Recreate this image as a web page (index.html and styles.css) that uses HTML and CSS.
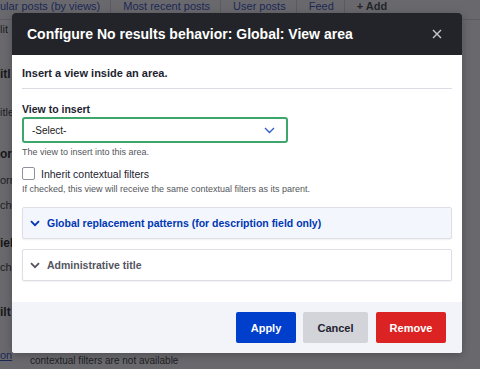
FILE: index.html
```html
<!DOCTYPE html>
<html>
<head>
<meta charset="utf-8">
<link rel="stylesheet" href="styles.css">
</head>
<body>
<div class="page">
  <div class="tabs">
    <span class="tab">ular posts (by views)</span>
    <span class="tab">Most recent posts</span>
    <span class="tab">User posts</span>
    <span class="tab">Feed</span>
    <span class="tab add">+ Add</span>
  </div>
  <div class="side">
    <span class="frag f1">lit</span>
    <span class="frag f2 b">itl</span>
    <span class="frag f3">itle</span>
    <span class="frag f4 b">or</span>
    <span class="frag f5">orn</span>
    <span class="frag f6">cho</span>
    <span class="frag f7 b">iel</span>
    <span class="frag f8">chi</span>
    <span class="frag f9 b">ilt</span>
    <span class="frag f10 link">on</span>
  </div>
  <div class="bottomline">contextual filters are not available</div>
</div>
<div class="overlay"></div>
<div class="dialog">
  <div class="titlebar">
    <h1 class="title">Configure No results behavior: Global: View area</h1>
    <span class="close">
      <svg width="10" height="10" viewBox="0 0 10 10"><path d="M1 1L9 9M9 1L1 9" stroke="#c8c9cc" stroke-width="1.4" fill="none"/></svg>
    </span>
  </div>
  <div class="content">
    <div class="intro">Insert a view inside an area.</div>
    <div class="field">
      <label class="label">View to insert</label>
      <div class="select">
        <span>-Select-</span>
        <svg width="11" height="7" viewBox="0 0 11 7"><path d="M1 1L5.5 5.5L10 1" stroke="#2f5ec4" stroke-width="1.4" fill="none"/></svg>
      </div>
      <div class="desc">The view to insert into this area.</div>
    </div>
    <div class="field check">
      <div class="checkrow"><span class="box"></span><span class="checklabel">Inherit contextual filters</span></div>
      <div class="desc">If checked, this view will receive the same contextual filters as its parent.</div>
    </div>
    <div class="details blue">
      <svg width="10" height="7" viewBox="0 0 10 7"><path d="M1 1.2L5 5.2L9 1.2" stroke="#0036b1" stroke-width="1.8" fill="none"/></svg>
      <span>Global replacement patterns (for description field only)</span>
    </div>
    <div class="details plain">
      <svg width="10" height="7" viewBox="0 0 10 7"><path d="M1 1.2L5 5.2L9 1.2" stroke="#545560" stroke-width="1.8" fill="none"/></svg>
      <span>Administrative title</span>
    </div>
  </div>
  <div class="footer">
    <button class="btn apply">Apply</button>
    <button class="btn cancel">Cancel</button>
    <button class="btn remove">Remove</button>
  </div>
</div>
</body>
</html>
```
FILE: styles.css
```css
html, body {
  margin: 0;
  padding: 0;
}
body {
  width: 480px;
  height: 369px;
  overflow: hidden;
  background: #ffffff;
  font-family: "Liberation Sans", Arial, sans-serif;
  position: relative;
}
.page {
  width: 480px;
  height: 369px;
  position: relative;
}
.tabs {
  display: flex;
  height: 22px;
  align-items: flex-start;
  border-bottom: 1px solid #d8d9de;
  font-size: 11px;
  color: #2c4cc0;
  margin-top: -3px;
}
.tab {
  padding: 0 10px 0 0;
  margin-right: 12px;
  border-right: 1px solid #d8d9de;
  line-height: 18px;
}
.tab.add { border-right: none; font-weight: bold; color: #444; }
.frag {
  position: absolute;
  left: 0;
  font-size: 11px;
  color: #333;
}
.frag.b { font-weight: bold; font-size: 12px; color: #222; }
.frag.link { color: #2c4cc0; text-decoration: underline; }
.f1 { top: 26px; }
.f2 { top: 70px; }
.f3 { top: 109px; }
.f4 { top: 150px; }
.f5 { top: 177px; }
.f6 { top: 202px; }
.f7 { top: 239px; }
.f8 { top: 264px; }
.f9 { top: 308px; }
.f10 { top: 352px; }
.bottomline {
  position: absolute;
  left: 30px;
  top: 358px;
  font-size: 10px;
  color: #333;
}
.overlay {
  position: absolute;
  inset: 0;
  background: rgba(20, 20, 26, 0.64);
}
.dialog {
  position: absolute;
  left: 12px;
  top: 13px;
  width: 450px;
  height: 340px;
  background: #fff;
  border-radius: 3px;
  overflow: hidden;
  display: flex;
  flex-direction: column;
  box-shadow: 0 2px 8px rgba(0,0,0,0.25);
}
.titlebar {
  height: 42px;
  flex: none;
  background: #232429;
  display: flex;
  align-items: center;
  justify-content: space-between;
  padding: 0 20px 0 15px;
}
.title {
  margin: 0;
  color: #fff;
  font-size: 14px;
  font-weight: bold;
}
.close { display: flex; }
.content {
  flex: 1;
  padding: 12px 10px 0 10px;
}
.intro {
  font-size: 11px;
  font-weight: bold;
  color: #222330;
  padding-bottom: 9px;
  border-bottom: 1px solid #dcdde2;
}
.field { margin-top: 14px; }
.label {
  display: block;
  font-size: 10.5px;
  font-weight: bold;
  color: #222330;
  margin-bottom: 2px;
}
.select {
  height: 22px;
  border: 2px solid #3fa66b;
  border-radius: 3px;
  display: flex;
  align-items: center;
  justify-content: space-between;
  padding: 0 11px 0 8px;
  box-sizing: content-box;
  width: 243px;
  font-size: 10px;
  color: #222;
}
.desc {
  font-size: 9px;
  color: #55565b;
  margin-top: 4px;
}
.field.check { margin-top: 10px; }
.checkrow {
  display: flex;
  align-items: center;
}
.box {
  width: 11px;
  height: 11px;
  border: 1px solid #8e929c;
  border-radius: 2px;
  margin-right: 6px;
}
.checklabel {
  font-size: 10.5px;
  color: #222330;
}
.details {
  box-sizing: border-box;
  height: 32px;
  border: 1px solid #dedfe4;
  border-radius: 2px;
  display: flex;
  align-items: center;
  padding-left: 7px;
  font-size: 10.5px;
  font-weight: bold;
  box-shadow: 0 1px 2px rgba(0,0,0,0.06);
}
.details svg { margin-right: 7px; }
.details.blue {
  background: #f3f6fd;
  color: #0036b1;
  margin-top: 13px;
}
.details.plain {
  background: #fff;
  color: #545560;
  margin-top: 10px;
}
.footer {
  height: 51px;
  flex: none;
  background: #f3f4f9;
  display: flex;
  align-items: center;
  justify-content: flex-end;
  padding-right: 16px;
  gap: 7px;
}
.btn {
  border: none;
  border-radius: 2px;
  height: 31px;
  font-family: "Liberation Sans", Arial, sans-serif;
  font-size: 11px;
  font-weight: bold;
  padding: 0;
}
.apply { width: 60px; background: #003ecc; color: #fff; }
.cancel { width: 65px; background: #d3d4d9; color: #222330; }
.remove { width: 70px; background: #dc2323; color: #fff; margin-left: 1px; }
```
